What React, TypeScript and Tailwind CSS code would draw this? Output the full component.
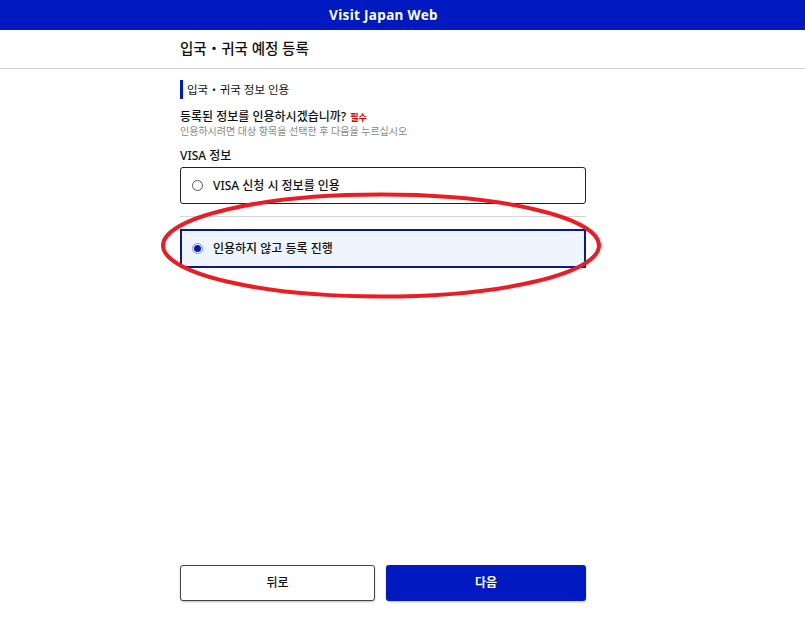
const font = { fontFamily: '"Noto Sans", "Noto Sans CJK KR", sans-serif' };

function Radio({ checked }: { checked?: boolean }) {
  return checked ? (
    <span className="flex h-[11px] w-[11px] items-center justify-center rounded-full border border-[#7f8fe0] bg-white">
      <span className="h-[7px] w-[7px] rounded-full bg-[#0019c0]" />
    </span>
  ) : (
    <span className="h-[11px] w-[11px] rounded-full border border-[#555] bg-white" />
  );
}

export default function App() {
  return (
    <div className="relative flex h-[620px] flex-col bg-white text-[#111]" style={font}>
      <header className="flex h-[30px] items-center justify-center bg-[#0019c0] pr-[38px]">
        <span className="text-[13.5px] font-bold tracking-wide text-white">Visit Japan Web</span>
      </header>

      <div className="flex h-[39px] items-center border-b border-[#cccccc] px-[180px]">
        <h1 className="text-[14.5px] font-medium">입국・귀국 예정 등록</h1>
      </div>

      <main className="flex-1 px-[180px]">
        <div className="w-[406px]">
          <div className="mt-[11px] flex h-[19px] items-center border-l-[3px] border-[#0019c0] pl-[4px] text-[11.5px]">
            입국・귀국 정보 인용
          </div>

          <div className="mt-[9px] flex items-baseline gap-[4px]">
            <span className="text-[12px] font-medium">등록된 정보를 인용하시겠습니까?</span>
            <span className="text-[9px] font-bold text-[#e00000]">필수</span>
          </div>
          <p className="mt-[-2px] text-[10px] text-[#888]">인용하시려면 대상 항목을 선택한 후 다음을 누르십시오</p>

          <p className="mt-[8px] text-[12px] font-medium">VISA 정보</p>

          <label className="mt-[2px] flex h-[37px] items-center gap-[10px] rounded-[3px] border border-[#222] pl-[11px] text-[12px] font-medium">
            <Radio />
            VISA 신청 시 정보를 인용
          </label>

          <div className="mt-[12px] border-t border-[#d4d4d4]" />

          <label className="mt-[12px] flex h-[39px] items-center gap-[10px] border-2 border-[#0a1a8c] bg-[#eff5fd] pl-[10px] text-[12px] font-medium">
            <Radio checked />
            인용하지 않고 등록 진행
          </label>
        </div>
      </main>

      <footer className="flex gap-[11px] px-[180px] pb-[19px]">
        <button className="h-[36px] w-[195px] rounded-[3px] border border-[#444] bg-white text-[12px] font-medium shadow-[0_1px_2px_rgba(0,0,0,0.25)]">
          뒤로
        </button>
        <button className="h-[36px] w-[200px] rounded-[3px] bg-[#0019c0] text-[12px] font-bold text-white shadow-[0_1px_2px_rgba(0,0,0,0.25)]">
          다음
        </button>
      </footer>

      <svg className="pointer-events-none absolute left-0 top-0" width="805" height="620">
        <ellipse cx="381" cy="245.5" rx="218" ry="51" fill="none" stroke="#ec1c24" strokeWidth="4" />
      </svg>
    </div>
  );
}
